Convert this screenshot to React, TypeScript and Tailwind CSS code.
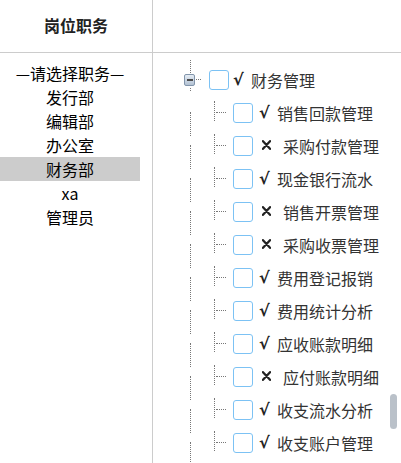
import React from 'react';

const roles = ['—请选择职务—', '发行部', '编辑部', '办公室', '财务部', 'xa', '管理员'];

const perms: { ok: boolean; name: string }[] = [
  { ok: true, name: '销售回款管理' },
  { ok: false, name: '采购付款管理' },
  { ok: true, name: '现金银行流水' },
  { ok: false, name: '销售开票管理' },
  { ok: false, name: '采购收票管理' },
  { ok: true, name: '费用登记报销' },
  { ok: true, name: '费用统计分析' },
  { ok: true, name: '应收账款明细' },
  { ok: false, name: '应付账款明细' },
  { ok: true, name: '收支流水分析' },
  { ok: true, name: '收支账户管理' },
];

const font = { fontFamily: '"Noto Sans CJK SC", "Noto Sans", sans-serif' };
const markFont = { fontFamily: '"DejaVu Sans", "Liberation Sans", sans-serif' };

function Box() {
  return <span className="block w-[20px] h-[20px] shrink-0 rounded-[3px] border border-[#7cc2f4] bg-white" />;
}

function Mark({ ok }: { ok: boolean }) {
  return ok ? (
    <span className="ml-[6px] w-[18px] shrink-0 font-bold text-[#222] text-[16px]" style={markFont}>√</span>
  ) : (
    <span className="ml-[9px] w-[21px] shrink-0 flex items-center">
      <svg width="9" height="10" viewBox="0 0 9 10" className="mt-[-1px]">
        <path d="M1 1.2 L8 8.8 M8 1.2 L1 8.8" stroke="#222" strokeWidth="2.3" strokeLinecap="round" fill="none" />
      </svg>
    </span>
  );
}

export default function App() {
  return (
    <div className="w-[401px] h-[463px] bg-white overflow-hidden flex text-[16px]" style={font}>
      {/* left: role list */}
      <div className="w-[153px] shrink-0 border-r border-[#cccccc] flex flex-col">
        <div className="h-[53px] border-b border-[#cccccc] flex items-center justify-center font-bold text-[#222] pb-[2px]">
          岗位职务
        </div>
        <div className="pt-[8px] w-[140px] text-black">
          {roles.map((r) => (
            <div
              key={r}
              className={`h-[24px] leading-[24px] text-center ${r === '财务部' ? 'bg-[#cccccc]' : ''}`}
            >
              {r}
            </div>
          ))}
        </div>
      </div>

      {/* right: permission tree */}
      <div className="flex-1 flex flex-col relative">
        <div className="h-[53px] border-b border-[#cccccc]" />
        <div className="pt-[10px] text-[#333]">
          {/* root */}
          <div className="h-[33px] flex items-center pl-[31px] relative">
            <span className="absolute left-[37px] top-[-3px] h-[13px] border-l border-dotted border-[#777]" />
            <span className="absolute left-[37px] top-[25px] h-[3px] border-l border-dotted border-[#777]" />
            <span className="absolute left-[43px] top-[16px] w-[5px] border-t border-dotted border-[#777]" />
            <span className="w-[11px] h-[12px] shrink-0 rounded-[2px] border border-[#8295ab] bg-gradient-to-b from-[#e6edf5] to-[#b3c2d3] flex items-center justify-center">
              <span className="block w-[6px] h-[2px] bg-[#4a4a4a]" />
            </span>
            <span className="ml-[14px]"><Box /></span>
            <span className="ml-[4px] w-[18px] shrink-0 font-bold text-[#222]" style={markFont}>√</span>
            <span>财务管理</span>
          </div>
          {perms.map((p) => (
            <div key={p.name} className="h-[33px] flex items-center pl-[80px] relative">
              <span className="absolute left-[37px] top-[16px] h-[24px] border-l border-dotted border-[#777]" />
              <span className="absolute left-[61px] top-[5px] h-[20px] border-l border-dotted border-[#777]" />
              <span className="absolute left-[63px] top-[16px] w-[10px] border-t border-dotted border-[#777]" />
              <Box />
              <Mark ok={p.ok} />
              <span>{p.name}</span>
            </div>
          ))}
        </div>
        {/* scrollbar thumb */}
        <div className="absolute left-[237px] top-[394px] w-[7px] h-[35px] rounded-full bg-[#bac1c9]" />
      </div>
    </div>
  );
}
